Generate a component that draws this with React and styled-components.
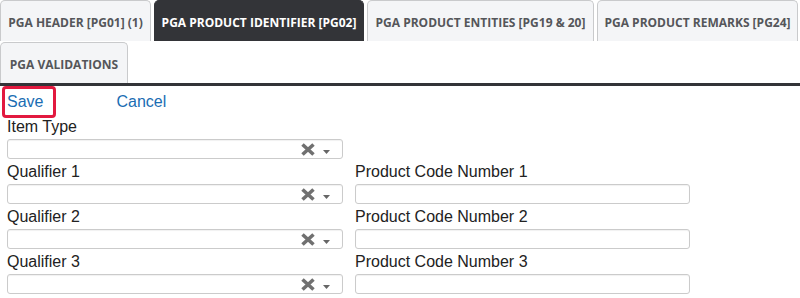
import styled, { createGlobalStyle } from "styled-components";

const GlobalStyle = createGlobalStyle`
  body {
    margin: 0;
    background: #fff;
    font-family: "Liberation Sans", Arial, sans-serif;
  }
`;

const tabs = [
  { label: "PGA HEADER [PG01] (1)", width: 151 },
  { label: "PGA PRODUCT IDENTIFIER [PG02]", width: 210, active: true },
  { label: "PGA PRODUCT ENTITIES [PG19 & 20]", width: 227 },
  { label: "PGA PRODUCT REMARKS [PG24]", width: 201 },
  { label: "PGA VALIDATIONS", width: 128 }
];

const rows = [
  { left: "Item Type" },
  { left: "Qualifier 1", right: "Product Code Number 1" },
  { left: "Qualifier 2", right: "Product Code Number 2" },
  { left: "Qualifier 3", right: "Product Code Number 3" }
];

const ClearIcon = () => (
  <svg width="14" height="13" viewBox="0 0 14 13">
    <path d="M1.5 1.5 L12.5 11.5 M12.5 1.5 L1.5 11.5" stroke="#707070" strokeWidth="3.6" />
  </svg>
);

const CaretIcon = () => (
  <svg width="7" height="4" viewBox="0 0 7 4">
    <path d="M0 0 H7 L3.5 4 Z" fill="#666" />
  </svg>
);

const App = () => {
  return (
    <Page>
      <GlobalStyle />
      <TabBar>
        {tabs.map((tab) => (
          <Tab key={tab.label} $active={tab.active} $width={tab.width}>
            {tab.label}
          </Tab>
        ))}
      </TabBar>
      <Actions>
        <SaveLink href="#">Save</SaveLink>
        <ActionLink href="#">Cancel</ActionLink>
      </Actions>
      <Form>
        {rows.map((row) => (
          <FormRow key={row.left}>
            <Field>
              <Label>{row.left}</Label>
              <SelectBox>
                <SelectIcons>
                  <ClearIcon />
                  <CaretWrap>
                    <CaretIcon />
                  </CaretWrap>
                </SelectIcons>
              </SelectBox>
            </Field>
            {row.right && (
              <Field>
                <Label>{row.right}</Label>
                <TextInput />
              </Field>
            )}
          </FormRow>
        ))}
      </Form>
    </Page>
  );
};

export default App;

const Page = styled.div`
  width: 800px;
  height: 298px;
  overflow: hidden;
`;

const TabBar = styled.ul`
  display: flex;
  flex-wrap: wrap;
  margin: 0;
  padding: 0;
  list-style: none;
  border-bottom: 3px solid #333438;
  column-gap: 3px;
  row-gap: 1px;
`;

const Tab = styled.li`
  box-sizing: border-box;
  width: ${(p) => p.$width}px;
  height: 41px;
  display: flex;
  align-items: center;
  justify-content: center;
  padding-top: 2px;
  border: 1px solid ${(p) => (p.$active ? "#333438" : "#c9cacc")};
  border-bottom: none;
  border-radius: 5px 5px 0 0;
  background: ${(p) => (p.$active ? "#333438" : "#f4f5f7")};
  color: ${(p) => (p.$active ? "#fff" : "#55565a")};
  font-family: "Open Sans", "Noto Sans", sans-serif;
  font-weight: 700;
  font-size: 12px;
  white-space: nowrap;
`;

const Actions = styled.div`
  display: flex;
  align-items: center;
  padding-left: 2px;
  height: 32px;
`;

const ActionLink = styled.a`
  color: #1a6db3;
  font-size: 16px;
  line-height: 18px;
  text-decoration: none;
`;

const SaveLink = styled(ActionLink)`
  box-sizing: border-box;
  height: 32px;
  display: flex;
  align-items: center;
  padding: 0 10px 0 2px;
  border: 3px solid #e2193f;
  border-radius: 4px;
  margin-right: 60px;
`;

const Form = styled.div`
  padding-left: 7px;
`;

const FormRow = styled.div`
  display: grid;
  grid-template-columns: 336px 335px;
  column-gap: 12px;
  margin-bottom: 4px;
`;

const Field = styled.div`
  display: flex;
  flex-direction: column;
`;

const Label = styled.label`
  font-size: 16px;
  line-height: 18px;
  height: 18px;
  color: #222;
  margin-bottom: 3px;
`;

const SelectBox = styled.div`
  box-sizing: border-box;
  height: 20px;
  border: 1px solid #cbcbcb;
  border-radius: 3px;
  box-shadow: inset 0 1px 1px rgba(0, 0, 0, 0.06);
  display: flex;
  justify-content: flex-end;
  align-items: center;
  padding-right: 12px;
`;

const SelectIcons = styled.div`
  display: flex;
  align-items: center;
  gap: 8px;
`;

const CaretWrap = styled.span`
  display: flex;
  padding-top: 6px;
`;

const TextInput = styled.input`
  box-sizing: border-box;
  height: 20px;
  margin: 0;
  border: 1px solid #cbcbcb;
  border-radius: 3px;
  box-shadow: inset 0 1px 1px rgba(0, 0, 0, 0.06);
  outline: none;
`;
